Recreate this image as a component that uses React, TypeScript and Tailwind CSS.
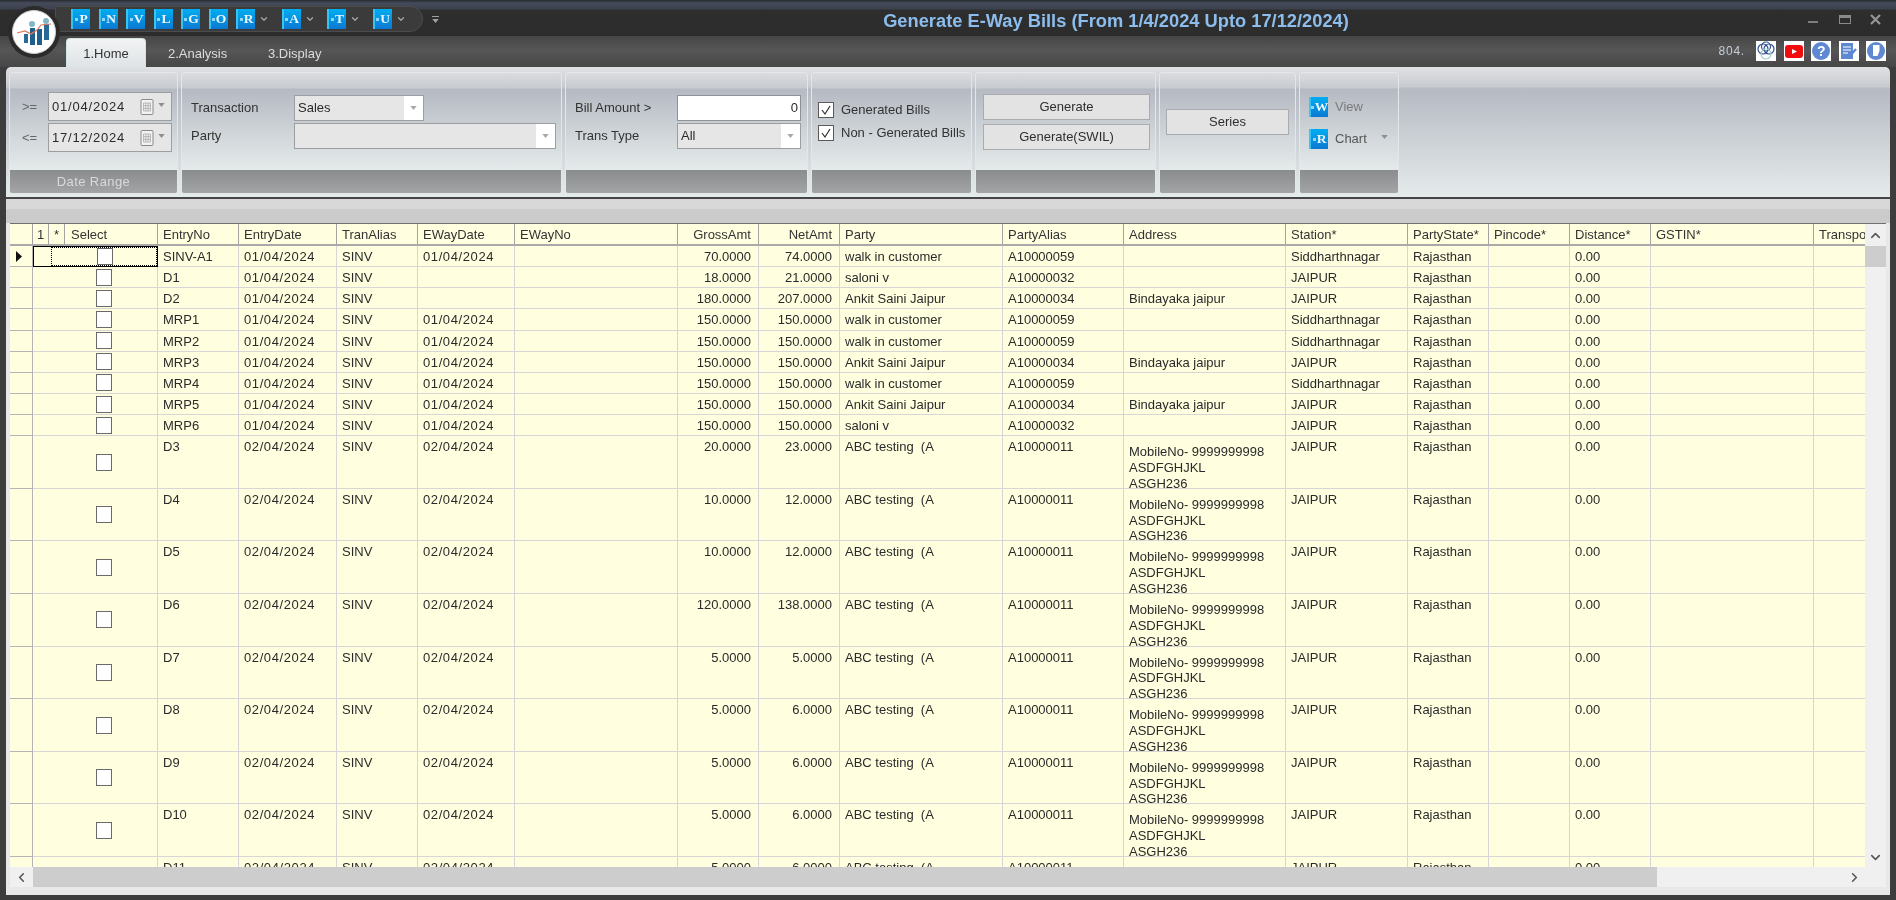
import React from 'react';
import { ChevronUp, ChevronDown, ChevronLeft, ChevronRight } from 'lucide-react';

const qatItems = [
    { letter: 'P' },
    { letter: 'N' },
    { letter: 'V' },
    { letter: 'L' },
    { letter: 'G' },
    { letter: 'O' },
    { letter: 'R', menu: true },
    { letter: 'A', menu: true },
    { letter: 'T', menu: true },
    { letter: 'U', menu: true },
];

type Align = 'left' | 'right';

const columns: { key: string; label: string; width: string; align?: Align }[] = [
    { key: 'entryNo', label: 'EntryNo', width: 'w-[81px]' },
    { key: 'entryDate', label: 'EntryDate', width: 'w-[98px]' },
    { key: 'tranAlias', label: 'TranAlias', width: 'w-[81px]' },
    { key: 'ewayDate', label: 'EWayDate', width: 'w-[97px]' },
    { key: 'ewayNo', label: 'EWayNo', width: 'w-[163px]' },
    { key: 'gross', label: 'GrossAmt', width: 'w-[81px]', align: 'right' },
    { key: 'net', label: 'NetAmt', width: 'w-[81px]', align: 'right' },
    { key: 'party', label: 'Party', width: 'w-[163px]' },
    { key: 'alias', label: 'PartyAlias', width: 'w-[121px]' },
    { key: 'address', label: 'Address', width: 'w-[162px]' },
    { key: 'station', label: 'Station*', width: 'w-[122px]' },
    { key: 'state', label: 'PartyState*', width: 'w-[81px]' },
    { key: 'pincode', label: 'Pincode*', width: 'w-[81px]' },
    { key: 'distance', label: 'Distance*', width: 'w-[81px]' },
    { key: 'gstin', label: 'GSTIN*', width: 'w-[163px]' },
    { key: 'transport', label: 'Transport', width: 'w-[100px]' },
];

type Row = Record<string, string>;

const walkIn = { party: 'walk in customer', alias: 'A10000059', address: '', station: 'Siddharthnagar' };
const saloni = { party: 'saloni v', alias: 'A10000032', address: '', station: 'JAIPUR' };
const ankit = { party: 'Ankit Saini Jaipur', alias: 'A10000034', address: 'Bindayaka jaipur', station: 'JAIPUR' };

const shortRow = (entryNo: string, ewayDate: string, gross: string, net: string, who: Row): Row => ({
    entryNo,
    entryDate: '01/04/2024',
    tranAlias: 'SINV',
    ewayDate,
    gross,
    net,
    state: 'Rajasthan',
    distance: '0.00',
    ...who,
});

const tallRow = (entryNo: string, gross: string, net: string): Row => ({
    entryNo,
    entryDate: '02/04/2024',
    tranAlias: 'SINV',
    ewayDate: '02/04/2024',
    gross,
    net,
    party: 'ABC testing  (A',
    alias: 'A10000011',
    address: 'MobileNo- 9999999998\nASDFGHJKL\nASGH236',
    station: 'JAIPUR',
    state: 'Rajasthan',
    distance: '0.00',
});

const shortRows = [
    shortRow('SINV-A1', '01/04/2024', '70.0000', '74.0000', walkIn),
    shortRow('D1', '', '18.0000', '21.0000', saloni),
    shortRow('D2', '', '180.0000', '207.0000', ankit),
    shortRow('MRP1', '01/04/2024', '150.0000', '150.0000', walkIn),
    shortRow('MRP2', '01/04/2024', '150.0000', '150.0000', walkIn),
    shortRow('MRP3', '01/04/2024', '150.0000', '150.0000', ankit),
    shortRow('MRP4', '01/04/2024', '150.0000', '150.0000', walkIn),
    shortRow('MRP5', '01/04/2024', '150.0000', '150.0000', ankit),
    shortRow('MRP6', '01/04/2024', '150.0000', '150.0000', saloni),
];

const tallRows = [
    tallRow('D3', '20.0000', '23.0000'),
    tallRow('D4', '10.0000', '12.0000'),
    tallRow('D5', '10.0000', '12.0000'),
    tallRow('D6', '120.0000', '138.0000'),
    tallRow('D7', '5.0000', '5.0000'),
    tallRow('D8', '5.0000', '6.0000'),
    tallRow('D9', '5.0000', '6.0000'),
    tallRow('D10', '5.0000', '6.0000'),
    tallRow('D11', '5.0000', '6.0000'),
];

const DownTriangle = ({ color = '#8f8f8f' }: { color?: string }) => (
    <svg width="7" height="4" viewBox="0 0 8 5">
        <polygon points="0,0 8,0 4,5" fill={color} />
    </svg>
);

const Logo = () => (
    <div className="absolute left-[8px] top-[6px] w-[52px] h-[52px] rounded-full bg-[#2b2b2b] flex items-center justify-center">
        <div className="w-[44px] h-[44px] rounded-full bg-white border border-[#cfcfcf] flex items-center justify-center">
            <svg width="36" height="30" viewBox="0 0 36 30">
                <rect x="8" y="17" width="4" height="9" fill="#2a6a96" />
                <rect x="14" y="11" width="5" height="17" fill="#1f5f8b" />
                <rect x="21" y="12" width="5" height="16" fill="#1f5f8b" />
                <rect x="28" y="7" width="5" height="16" fill="#2a6a96" />
                <circle cx="16" cy="7" r="3" fill="#7fb7c4" />
                <circle cx="30" cy="4" r="3" fill="#7fb7c4" />
                <polyline points="1,16 9,14 15,17 21,13 25,8 35,7" fill="none" stroke="#e0795a" strokeWidth="1.2" />
            </svg>
        </div>
    </div>
);

const QatButton = ({ letter }: { letter: string }) => (
    <div className="w-[19px] h-[20px] flex items-center justify-center gap-[1px] overflow-hidden border-l-2 border-[#35c4f5] bg-[linear-gradient(180deg,#00aef2_0%,#0a78d2_100%)]">
        <span className="w-[3px] h-[3px] shrink-0 bg-[#8fd6f7]" />
        <span className="font-['Liberation_Serif',serif] text-[13.5px] leading-none font-bold text-[#eaf6fd]">{letter}</span>
    </div>
);

const TitleBar = () => (
    <div className="h-[36px] flex bg-[linear-gradient(180deg,#262a30_0px,#454b5a_3px,#3c414e_9px,#2e2e2e_10px,#2c2c2c_100%)]">
        <div className="ml-[55px] mt-[6px] w-[368px] h-[26px] rounded-r-full bg-[#3b3b3b] border border-[#4c4c4c] flex items-center gap-[8.5px] pl-[15px]">
            {qatItems.map(item => (
                <div key={item.letter} className="flex items-center">
                    <QatButton letter={item.letter} />
                    {item.menu && (
                        <span className="w-[18px] flex justify-center">
                            <ChevronDown size={10} strokeWidth={3} className="text-[#a5a5a5]" />
                        </span>
                    )}
                </div>
            ))}
        </div>
        <div className="ml-[8px] mt-[16px] w-[9px] flex flex-col items-center gap-[2px]">
            <span className="w-[7px] h-[1px] bg-[#a0a0a0]" />
            <DownTriangle color="#a0a0a0" />
        </div>
        <div className="flex-1 pt-[10px] text-center text-[18.3px] leading-[22px] font-bold text-[#8cbdec] whitespace-nowrap">
            Generate E-Way Bills (From 1/4/2024 Upto 17/12/2024)
        </div>
        <div className="w-[104px] relative">
            <span className="absolute left-[16px] top-[21px] w-[10px] h-[2px] bg-[#7e7e7e]" />
            <span className="absolute left-[47px] top-[15px] w-[12px] h-[9px] border border-[#8a8a8a] border-t-[3px]" />
            <svg className="absolute left-[78px] top-[14px]" width="11" height="11" viewBox="0 0 11 11">
                <path d="M1 1 L10 10 M10 1 L1 10" stroke="#969696" strokeWidth="2.2" />
            </svg>
        </div>
    </div>
);

const HelpIcons = () => (
    <div className="flex gap-[7.4px]">
        <div className="w-[20px] h-[20px] bg-white flex items-center justify-center">
            <svg width="20" height="20" viewBox="0 0 20 20" fill="none" stroke="#33508f" strokeWidth="1.2">
                <circle cx="7" cy="8" r="5" />
                <circle cx="13" cy="8" r="5" />
                <circle cx="10" cy="5.5" r="4.5" />
                <circle cx="10" cy="13" r="5" stroke="#a9d3cf" />
            </svg>
        </div>
        <div className="w-[20px] h-[20px] bg-white flex items-center justify-center">
            <svg width="18" height="13" viewBox="0 0 18 13">
                <rect width="18" height="13" rx="3" fill="#f10d0d" />
                <polygon points="7,4 12,6.5 7,9" fill="#fff" />
            </svg>
        </div>
        <div className="w-[20px] h-[20px] bg-white flex items-center justify-center">
            <div className="w-[18px] h-[18px] rounded-full bg-[#5f88d2] flex items-center justify-center text-[14px] leading-none font-bold text-white">
                ?
            </div>
        </div>
        <div className="w-[20px] h-[20px] bg-white flex items-center justify-center">
            <svg width="18" height="18" viewBox="0 0 18 18">
                <rect x="1" y="1" width="12" height="16" fill="#5f88d2" />
                <path d="M3 5 H11 M3 8 H11 M3 11 H8" stroke="#fff" strokeWidth="1.2" />
                <path d="M9 15 L16 7" stroke="#5f88d2" strokeWidth="2.4" />
            </svg>
        </div>
        <div className="w-[20px] h-[20px] bg-white flex items-center justify-center">
            <svg width="18" height="18" viewBox="0 0 18 18">
                <circle cx="9" cy="9" r="9" fill="#5f88d2" />
                <path d="M6 3 H13 V9 L11 14 H6 Z" fill="#fff" />
                <path d="M13 3 V9 L11 14" fill="none" stroke="#5f88d2" strokeWidth="1" />
            </svg>
        </div>
    </div>
);

const TabRow = () => (
    <div className="h-[31px] flex bg-[linear-gradient(180deg,#464646_0%,#565656_45%,#464646_100%)] text-[13px]">
        <div className="ml-[66px] mt-[2px] w-[80px] h-[29px] pt-[2px] rounded-t-[4px] bg-[linear-gradient(180deg,#f2f4f4_0%,#dfe3e6_100%)] border-x border-t border-[#cfe3df] flex items-center justify-center text-[#333]">
            1.Home
        </div>
        <div className="ml-[22px] mt-[4px] w-[59px] flex items-center text-[#dcdcdc]">2.Analysis</div>
        <div className="ml-[41px] mt-[4px] flex items-center text-[#dcdcdc]">3.Display</div>
        <div className="ml-auto mr-[10px] mt-[5px] flex h-[20px] items-center">
            <span className="w-[38px] text-[12px] tracking-[0.8px] text-[#c4cdd6]">804.</span>
            <HelpIcons />
        </div>
    </div>
);

const RibbonGroup = ({ width, title, children }: { width: string; title?: string; children: React.ReactNode }) => (
    <div className={`${width} h-[122px] flex flex-col rounded-[3px] border border-[#e4e6e8] overflow-hidden`}>
        <div className="h-[97px] flex flex-col bg-[linear-gradient(180deg,#dadcdf_0%,#c8cbd0_15%,#b5bac3_17%,#e5ebeb_100%)] text-[13px] text-[#333]">
            {children}
        </div>
        <div className="flex-1 flex items-center justify-center bg-[linear-gradient(180deg,#8b8c8e_0%,#a3a4a6_100%)] text-[13px] tracking-[0.4px] text-[#d8dadb]">
            {title}
        </div>
    </div>
);

const CalendarGlyph = () => (
    <svg width="14" height="16" viewBox="0 0 13 16">
        <rect x="0.5" y="0.5" width="12" height="15" rx="1" fill="#f2f2f2" stroke="#8a8a8a" />
        <path d="M3 4 H10 V12 H3 Z M3 6.7 H10 M3 9.4 H10 M5.3 4 V12 M7.7 4 V12" fill="none" stroke="#a4a4a4" strokeWidth="0.7" />
    </svg>
);

const DateField = ({ op, value }: { op: string; value: string }) => (
    <div className="flex items-center">
        <span className="w-[38px] pl-[12px] text-[#666]">{op}</span>
        <div className="w-[124px] h-[29px] bg-[#e6e6e6] border border-[#9c9ea1] flex items-center pl-[3px] pr-[6px] tracking-[0.8px] text-[#2a2a2a]">
            <span className="flex-1">{value}</span>
            <CalendarGlyph />
            <span className="ml-[4px] mb-[3px]">
                <DownTriangle />
            </span>
        </div>
    </div>
);

const Combo = ({ value, width }: { value: string; width: string }) => (
    <div className={`${width} h-[26px] bg-[#e6e6e6] border border-[#9c9ea1] flex items-center`}>
        <span className="flex-1 pl-[3px] text-[#2a2a2a]">{value}</span>
        <span className="w-[19px] h-full bg-white flex items-center justify-center">
            <DownTriangle color="#a9a9a9" />
        </span>
    </div>
);

const CheckItem = ({ label }: { label: string }) => (
    <div className="flex items-center gap-[7px] h-[21px]">
        <span className="w-[16px] h-[16px] bg-white border border-[#5a5a5a] flex items-center justify-center">
            <svg width="12" height="12" viewBox="0 0 12 12">
                <path d="M2 6 L5 10 L10 2" fill="none" stroke="#333" strokeWidth="1.2" />
            </svg>
        </span>
        <span className="whitespace-nowrap">{label}</span>
    </div>
);

const RibbonButton = ({ label, width }: { label: string; width: string }) => (
    <div className={`${width} h-[26px] bg-[#e3e3e3] border border-[#a9abae] flex items-center justify-center text-[#2e2e2e]`}>
        {label}
    </div>
);

const Ribbon = () => (
    <div className="h-[130px] mx-[6px] pt-[5px] pl-[3px] flex gap-[3px] rounded-t-[5px] bg-[linear-gradient(180deg,#dfe1e3_0%,#c8cbd0_15%,#b5bac3_17%,#e5ebeb_100%)]">
        <RibbonGroup width="w-[169px]" title="Date Range">
            <div className="pt-[19px] flex flex-col gap-[2px]">
                <DateField op=">=" value="01/04/2024" />
                <DateField op="<=" value="17/12/2024" />
            </div>
        </RibbonGroup>
        <RibbonGroup width="w-[381px]">
            <div className="pt-[22px] flex flex-col gap-[2px]">
                <div className="flex items-center pl-[9px]">
                    <span className="w-[103px]">Transaction</span>
                    <Combo value="Sales" width="w-[130px]" />
                </div>
                <div className="flex items-center pl-[9px]">
                    <span className="w-[103px]">Party</span>
                    <Combo value="" width="w-[262px]" />
                </div>
            </div>
        </RibbonGroup>
        <RibbonGroup width="w-[243px]">
            <div className="pt-[22px] flex flex-col gap-[2px]">
                <div className="flex items-center pl-[9px]">
                    <span className="w-[102px]">Bill Amount &gt;</span>
                    <div className="w-[124px] h-[26px] bg-white border border-[#8f9194] flex items-center justify-end pr-[2px] text-[#2a2a2a]">0</div>
                </div>
                <div className="flex items-center pl-[9px]">
                    <span className="w-[102px]">Trans Type</span>
                    <Combo value="All" width="w-[124px]" />
                </div>
            </div>
        </RibbonGroup>
        <RibbonGroup width="w-[161px]">
            <div className="pt-[26px] pl-[6px] flex flex-col gap-[2px]">
                <CheckItem label="Generated Bills" />
                <CheckItem label="Non - Generated Bills" />
            </div>
        </RibbonGroup>
        <RibbonGroup width="w-[181px]">
            <div className="pt-[21px] pl-[7px] flex flex-col gap-[4px]">
                <RibbonButton label="Generate" width="w-[167px]" />
                <RibbonButton label="Generate(SWIL)" width="w-[167px]" />
            </div>
        </RibbonGroup>
        <RibbonGroup width="w-[137px]">
            <div className="pt-[36px] pl-[6px]">
                <RibbonButton label="Series" width="w-[123px]" />
            </div>
        </RibbonGroup>
        <RibbonGroup width="w-[100px]">
            <div className="pt-[24px] pl-[9px] flex flex-col gap-[12px] text-[#555]">
                <div className="flex items-center gap-[7px]">
                    <QatButton letter="W" />
                    <span className="text-[#7b7b7b]">View</span>
                </div>
                <div className="flex items-center gap-[7px]">
                    <QatButton letter="R" />
                    <span>Chart</span>
                    <span className="ml-[7px] mb-[4px]">
                        <DownTriangle />
                    </span>
                </div>
            </div>
        </RibbonGroup>
    </div>
);

const GridCheckbox = () => (
    <span className="block w-[16px] h-[17px] bg-white border border-[#6a6a6a]" />
);

const GridHeader = () => (
    <div className="h-[22px] flex shrink-0 border-b-2 border-[#a9a9a9] bg-[#ffffe0] text-[#333] leading-[22px]">
        <div className="w-[23px] shrink-0 border-r border-[#a3a3a3]" />
        <div className="w-[16px] shrink-0 border-r border-[#a3a3a3] text-center">1</div>
        <div className="w-[16px] shrink-0 border-r border-[#a3a3a3] text-center">*</div>
        <div className="w-[93px] shrink-0 border-r border-[#a3a3a3] pl-[6px]">Select</div>
        {columns.map(col => (
            <div
                key={col.key}
                className={`${col.width} shrink-0 border-r border-[#a3a3a3] whitespace-nowrap ${col.align === 'right' ? 'text-right pr-[7px]' : 'pl-[5px]'}`}
            >
                {col.label}
            </div>
        ))}
    </div>
);

const cellText = (key: string, tall?: boolean) => {
    if (key === 'address' && tall) return 'whitespace-pre-line pt-[8px] leading-[15.8px]';
    if (key === 'party') return 'whitespace-pre leading-[20px] pt-[1px]';
    if (key === 'entryDate' || key === 'ewayDate') return 'whitespace-nowrap tracking-[0.6px] leading-[20px] pt-[1px]';
    return 'whitespace-nowrap leading-[20px] pt-[1px]';
};

const GridRow = ({ row, tall, current }: { row: Row; tall?: boolean; current?: boolean }) => (
    <div className={`${tall ? 'h-[52.6px]' : 'h-[21.15px]'} flex shrink-0 bg-[#ffffe0] text-[#2a2a2a]`}>
        <div className="w-[23px] shrink-0 border-r border-b border-[#b4b4b4] flex items-center pl-[6px]">
            {current && (
                <svg width="6" height="11" viewBox="0 0 6 11">
                    <polygon points="0,0 6,5.5 0,11" fill="#111" />
                </svg>
            )}
        </div>
        {current ? (
            <div className="w-[125px] shrink-0 border border-black flex">
                <div className="flex-1 ml-[17px] border border-dotted border-black flex items-center pl-[45px]">
                    <GridCheckbox />
                </div>
            </div>
        ) : (
            <div className="w-[125px] shrink-0 border-r border-b border-[#d6d6d6] flex items-center pl-[63px]">
                <GridCheckbox />
            </div>
        )}
        {columns.map(col => (
            <div
                key={col.key}
                className={`${col.width} shrink-0 border-r border-b border-[#d6d6d6] ${
                    col.align === 'right' ? 'text-right pr-[7px]' : 'pl-[5px]'
                } ${cellText(col.key, tall)}`}
            >
                {row[col.key] ?? ''}
            </div>
        ))}
    </div>
);

const VScrollbar = () => (
    <div className="w-[21px] shrink-0 flex flex-col bg-[#f0f0f0]">
        <div className="h-[22px] flex items-center justify-center">
            <ChevronUp size={15} strokeWidth={2.5} className="text-[#555]" />
        </div>
        <div className="h-[21px] bg-[#cdcdcd]" />
        <div className="flex-1" />
        <div className="h-[20px] flex items-center justify-center">
            <ChevronDown size={15} strokeWidth={2.5} className="text-[#555]" />
        </div>
    </div>
);

const HScrollbar = () => (
    <div className="h-[20px] shrink-0 flex bg-[#f0f0f0]">
        <div className="w-[23px] flex items-center justify-center">
            <ChevronLeft size={15} strokeWidth={2.5} className="text-[#555]" />
        </div>
        <div className="w-[1624px] bg-[#cdcdcd]" />
        <div className="flex-1 flex items-center justify-end pr-[24px]">
            <ChevronRight size={15} strokeWidth={2.5} className="text-[#555]" />
        </div>
    </div>
);

const Grid = () => (
    <div className="mx-[4px] h-[664px] flex flex-col border-t border-[#6f6f6f] bg-[#f0f0f0] text-[13px]">
        <div className="flex-1 flex min-h-0">
            <div className="flex-1 flex flex-col min-w-0 overflow-hidden">
                <GridHeader />
                {shortRows.map((row, i) => (
                    <GridRow key={row.entryNo} row={row} current={i === 0} />
                ))}
                {tallRows.map(row => (
                    <GridRow key={row.entryNo} row={row} tall />
                ))}
            </div>
            <VScrollbar />
        </div>
        <HScrollbar />
    </div>
);

export default function App() {
    return (
        <div className="w-[1896px] h-[900px] overflow-hidden flex flex-col bg-[#3d3d3d] font-['Liberation_Sans',Arial,sans-serif] blur-[0.35px]">
            <div className="relative">
                <TitleBar />
                <TabRow />
                <Logo />
            </div>
            <Ribbon />
            <div className="mx-[6px] border-t-2 border-[#454545] bg-[#e8e8e8] h-[698px]">
                <div className="h-[24px] bg-[linear-gradient(180deg,#d8d8d8_0%,#d8d8d8_40%,#cbcbcb_40%,#cbcbcb_100%)]" />
                <Grid />
            </div>
        </div>
    );
}
